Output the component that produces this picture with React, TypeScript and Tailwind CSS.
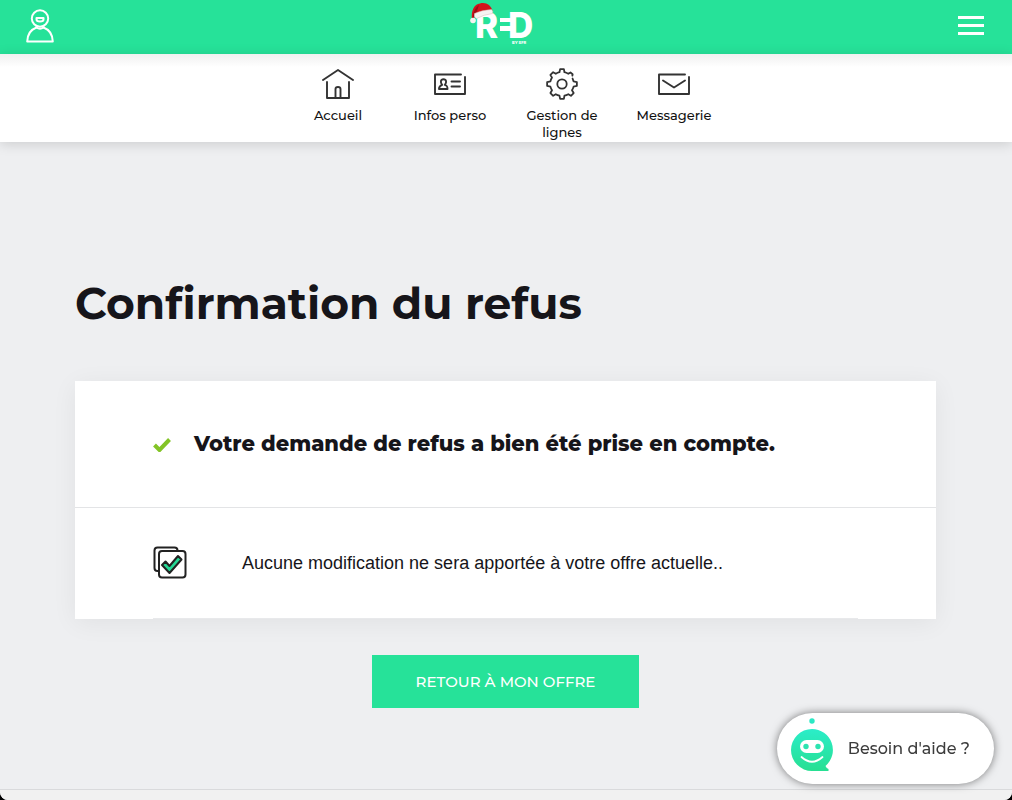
import type { ReactNode } from "react";

const HomeIcon = () => (
  <svg viewBox="0 0 32 32" className="w-8 h-8" fill="none" stroke="#333" strokeWidth="1.9" strokeLinecap="round" strokeLinejoin="round" aria-hidden="true">
    <path d="M1 12 16 2 31 12" />
    <path d="M5 14v16h22V14" />
    <path d="M13.500 30V21q0-2 2.500-2t2.500 2v9" />
  </svg>
);

const IdCardIcon = () => (
  <svg viewBox="0 0 32 32" className="w-8 h-8" fill="none" stroke="#333" strokeWidth="1.9" strokeLinecap="round" strokeLinejoin="round" aria-hidden="true">
    <path d="M27 6.500H1V26h30V9" />
    <path d="M5 21c0-3 1.200-3.500 3.200-4.200-2.200-2.300-1.600-5.600 1.300-5.600s3.500 3.300 1.300 5.600c2 .7 2.700 1.200 2.700 4.200z" />
    <path d="M17.500 13.500H26M17.500 18.500H26" />
  </svg>
);

const GearIcon = () => (
  <svg viewBox="0 0 34 34" className="w-[34px] h-8" fill="none" stroke="#333" strokeWidth="1.9" strokeLinecap="round" strokeLinejoin="round" aria-hidden="true">
    <path d="M28 8.200 28.300 6.600 26 4.800 23.700 6.200Q21.500 5 19.600 4.500L19 1.200h-4l-.7 3.300q-2 .5-3.900 1.600L7.600 4.500 4.700 7.400l1.700 2.800q-1.200 1.900-1.700 4L1.200 15v4l3.500.8q.5 2 1.700 3.900l-1.700 2.900 2.900 2.900 2.800-1.700q1.900 1.100 3.900 1.600l.7 3.400h4l.6-3.400q2.100-.5 4.100-1.600l2.800 1.700 2.900-2.900-1.800-2.900q1.200-1.900 1.700-3.900l3.500-.8v-4l-3.500-.8-1.100-3" />
    <circle cx="17" cy="17" r="5" />
  </svg>
);

const MailIcon = () => (
  <svg viewBox="0 0 32 32" className="w-8 h-8" fill="none" stroke="#333" strokeWidth="1.9" strokeLinecap="round" strokeLinejoin="round" aria-hidden="true">
    <path d="M27 6.500H1V26h30V9" />
    <path d="M5 12.500 16 19.500 27 12.500" />
  </svg>
);

const UserIcon = () => (
  <svg viewBox="0 0 28 34" className="w-7 h-[34px]" fill="none" stroke="white" strokeWidth="2" strokeLinejoin="round" aria-hidden="true">
    <circle cx="14" cy="9.500" r="8.200" />
    <path d="M10.500 9h7v1.200q0 2.300-3.500 2.300t-3.500-2.300z" />
    <path d="M10.500 17v1.500C5 20.500 1.500 25 1.200 32.500h25.600C26.500 25 23 20.500 17.500 18.500V17" />
    <path d="M10.500 18.500q3.500 2.500 7 0" />
  </svg>
);

const RedLogo = () => (
  <svg viewBox="0 0 66 44" className="w-[66px] h-11" role="img" aria-label="RED by SFR">
    <text y="37" fill="white" fontFamily="Inter, sans-serif" fontSize="35" fontWeight="800">
      <tspan x="6">R</tspan>
      <tspan x="39">D</tspan>
      <tspan x="43" y="43" fontSize="4">BY SFR</tspan>
    </text>
    <rect x="31" y="17" width="14" height="4" fill="white" />
    <rect x="31" y="25" width="14" height="5" fill="white" />
    {/* Christmas hat */}
    <path d="M3 18C2 10 5 3 11 2.500 17 1 22 4 23.500 10L6 14.500 4 19z" fill="#d3141c" />
    <path d="M10 4C6 7 4 12 3.500 17L7 13z" fill="#9c0e16" />
    <path d="M5.500 12.500Q13 9 22.500 8.500q2 1.500 1 4Q15 13.500 7.500 17.500 4.500 16 5.500 12.500z" fill="#f7f3f2" stroke="#d8b9b5" strokeWidth=".5" />
    <circle cx="4" cy="19.500" r="2.800" fill="#f7f3f2" />
  </svg>
);

const DoubleCheckIcon = () => (
  <svg viewBox="0 0 34 34" className="w-[34px] h-[34px]" fill="none" stroke="#222" strokeWidth="2" strokeLinejoin="round" aria-hidden="true">
    <rect x="1.500" y="1.500" width="23" height="23.500" rx="3" />
    <rect x="6" y="5" width="26.500" height="26.500" rx="3" fill="white" />
    <path d="m9 19 3.500-3.500 4 4.500L25 10l3.500 3.500L16.500 27z" fill="#24d894" />
  </svg>
);

const BotIcon = () => (
  <svg viewBox="0 0 42 54" className="mb-2 w-[42px] h-[54px]" aria-hidden="true">
    <defs>
      <linearGradient id="bot" x1="0" y1="0" x2="0" y2="1">
        <stop offset="0" stopColor="#2bedc9" />
        <stop offset="1" stopColor="#27df92" />
      </linearGradient>
    </defs>
    <circle cx="21" cy="3" r="2.700" fill="#2be8c4" />
    <path d="M21 11a21 21 0 0 1 13.500 37q1 2.500 3 3v2H21a21 21 0 0 1 0-42z" fill="url(#bot)" />
    <rect x="9" y="22" width="24" height="13" rx="6.500" fill="white" />
    <circle cx="15" cy="28.500" r="2.700" fill="#2be4b0" />
    <circle cx="27" cy="28.500" r="2.700" fill="#2be4b0" />
    <path d="M10.500 39q10.500 9.500 21 0" fill="none" stroke="white" strokeWidth="1.800" strokeLinecap="round" />
  </svg>
);

const navItems = [
  { name: "Accueil", icon: HomeIcon },
  { name: "Infos perso", icon: IdCardIcon },
  { name: "Gestion de lignes", icon: GearIcon },
  { name: "Messagerie", icon: MailIcon },
];

const CardRow = ({ children, className }: { children: ReactNode; className: string }) => (
  <div className={`flex items-center px-[78px] ${className}`}>{children}</div>
);

const App = () => {
  return (
    <div className="bg-black">
      <div className="flex min-h-screen flex-col overflow-hidden rounded-b-lg bg-[#eeeff1] font-['Montserrat','Inter',sans-serif] text-[#16151a]">
        <header className="flex h-[54px] items-center justify-between bg-[#26e299] px-[26px] pb-[3px]">
          <button type="button" aria-label="Mon compte" className="flex w-8 justify-start">
            <UserIcon />
          </button>
          <a href="#" className="mb-1.5 -ml-3">
            <RedLogo />
          </a>
          <button type="button" aria-label="Menu" className="flex w-[28px] flex-col items-start gap-[5px]">
            <span className="h-[3px] w-[26px] bg-white" />
            <span className="h-[3px] w-[26px] bg-white" />
            <span className="h-[3px] w-[26px] bg-white" />
          </button>
        </header>

        <nav className="flex h-[88px] justify-center bg-white bg-linear-to-b from-[#f0f0f0] to-white to-15% pt-3.5 shadow-[0_2px_12px_rgba(0,0,0,0.15)]">
          {navItems.map(({ name, icon: Icon }) => (
            <a key={name} href="#" className="flex w-28 flex-col items-center gap-[7px] px-4 text-center text-[13px] leading-[17px] font-medium text-[#111]">
              <Icon />
              {name}
            </a>
          ))}
        </nav>

        <main className="flex-1 pt-[132px] pr-[76px] pb-20 pl-[75px]">
          <h1 className="text-[44px] leading-[58px] font-bold">Confirmation du refus</h1>

          <section className="mt-[49px] bg-white shadow-[0_4px_24px_rgba(0,0,0,0.06)]">
            <CardRow className="h-[127px] gap-[23px] border-b border-[#e3e4e6]">
              <svg viewBox="0 0 18 14" className="mt-0.5 w-[18px] h-3.5" aria-hidden="true">
                <path d="M1.500 7 6.500 12 16.500 1.500" fill="none" stroke="#83c426" strokeWidth="4" />
              </svg>
              <h2 className="text-[21px] leading-7 font-extrabold">
                Votre demande de refus a bien été prise en compte.
              </h2>
            </CardRow>
            <CardRow className="h-[111px] gap-[55px] pb-0.5">
              <DoubleCheckIcon />
              <p className="font-['Liberation_Sans',sans-serif] text-[18px] leading-6">
                Aucune modification ne sera apportée à votre offre actuelle..
              </p>
            </CardRow>
            <div className="mx-[78px] -mt-px h-px bg-[#e8e9eb]" />
          </section>

          <div className="mt-9 flex justify-center">
            <button type="button" className="h-[53px] bg-[#26e299] px-11 text-[15px] leading-5 font-medium text-white">
              RETOUR À MON OFFRE
            </button>
          </div>
        </main>

        <footer className="h-[11px] border-t border-[#d9dadc] bg-[#f1f1f1]" />
      </div>

      <button
        type="button"
        className="fixed right-[18px] bottom-4 flex h-[71px] items-center gap-[15px] rounded-full bg-white pr-6 pl-3.5 font-['Montserrat','Inter',sans-serif] text-[16px] leading-6 font-medium text-[#3c3c3c] shadow-[0_0_8px_rgba(0,0,0,0.5)]"
      >
        <BotIcon />
        Besoin d'aide ?
      </button>
    </div>
  );
};

export default App;
